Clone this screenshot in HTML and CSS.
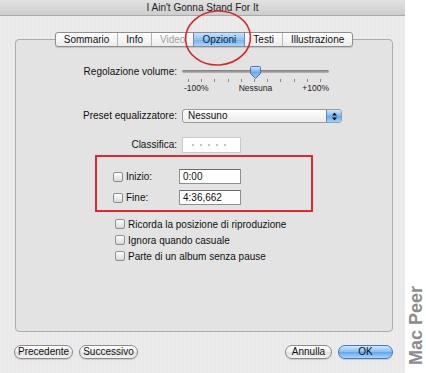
FILE: index.html
```html
<!DOCTYPE html>
<html lang="it">
<head>
  <meta charset="UTF-8" />
  <title>I Ain't Gonna Stand For It</title>
  <link rel="stylesheet" href="styles.css">
</head>
<body>
  <div class="page">
    <div class="window">
      <div class="titlebar">I Ain't Gonna Stand For It</div>
      <div class="content">
        <!-- Group box with the tab bar sitting on its top border -->
        <div class="group">
          <div class="tabs">
            <div class="tab">Sommario</div>
            <div class="tab">Info</div>
            <div class="tab disabled">Video</div>
            <div class="tab active">Opzioni</div>
            <div class="tab">Testi</div>
            <div class="tab">Illustrazione</div>
          </div>

          <div class="form">
            <div class="row row-volume">
              <div class="label">Regolazione volume:</div>
              <div class="slider">
                <div class="track"></div>
                <svg class="thumb" width="11" height="13" viewBox="0 0 11 13">
                  <defs>
                    <linearGradient id="tg" x1="0" y1="0" x2="0" y2="1">
                      <stop offset="0" stop-color="#d6e9fc"/>
                      <stop offset="0.5" stop-color="#6aa9ec"/>
                      <stop offset="1" stop-color="#9fcdf6"/>
                    </linearGradient>
                  </defs>
                  <path d="M1.5 0.5h8a1 1 0 0 1 1 1v6l-5 5-5-5v-6a1 1 0 0 1 1-1z" fill="url(#tg)" stroke="#4a74a8" stroke-width="1"/>
                </svg>
                <div class="ticks">
                  <i></i><i></i><i></i><i></i><i></i><i></i><i></i><i></i><i></i><i></i><i></i>
                </div>
                <div class="scale">
                  <span>-100%</span>
                  <span>Nessuna</span>
                  <span>+100%</span>
                </div>
              </div>
            </div>

            <div class="row row-preset">
              <div class="label">Preset equalizzatore:</div>
              <div class="popup">
                <span class="popup-text">Nessuno</span>
                <span class="popup-arrows">
                  <svg width="7" height="9" viewBox="0 0 7 9"><path d="M3.5 0.5 6 3.5H1z M3.5 8.5 6 5.5H1z" fill="#111"/></svg>
                </span>
              </div>
            </div>

            <div class="row row-rating">
              <div class="label">Classifica:</div>
              <div class="rating">
                <i></i><i></i><i></i><i></i><i></i>
              </div>
            </div>

            <!-- red annotation frame around start / stop time -->
            <div class="highlight">
              <div class="time-row">
                <span class="checkbox"></span>
                <span class="time-label">Inizio:</span>
                <span class="field">0:00</span>
              </div>
              <div class="time-row">
                <span class="checkbox"></span>
                <span class="time-label">Fine:</span>
                <span class="field">4:36,662</span>
              </div>
            </div>

            <div class="checks">
              <div class="check-row"><span class="checkbox"></span>Ricorda la posizione di riproduzione</div>
              <div class="check-row"><span class="checkbox"></span>Ignora quando casuale</div>
              <div class="check-row"><span class="checkbox"></span>Parte di un album senza pause</div>
            </div>
          </div>
        </div>

        <div class="buttons">
          <div class="btn-group">
            <div class="btn">Precedente</div>
            <div class="btn">Successivo</div>
          </div>
          <div class="btn-group">
            <div class="btn btn-cancel">Annulla</div>
            <div class="btn btn-ok">OK</div>
          </div>
        </div>
      </div>
    </div>
    <div class="side">
      <span class="watermark">Mac Peer</span>
    </div>
  </div>

  <!-- red hand-drawn circle over the Opzioni tab -->
  <svg class="circle" width="72" height="58" viewBox="0 0 72 58">
    <ellipse cx="35" cy="29" rx="32.5" ry="27" fill="none" stroke="#d8262d" stroke-width="1.6" transform="rotate(-4 35 29)"/>
  </svg>
</body>
</html>
```

FILE: styles.css
```css
/* Base page */
body {
  margin: 0;
  font-family: "Liberation Sans", Arial, sans-serif;
  font-size: 10px;
  color: #111;
  background: #fff;
  position: relative;
  overflow: hidden;
}
.page {
  display: flex;
  width: 426px;
  height: 373px;
}
/* Window */
.window {
  width: 405px;
  height: 373px;
  background: #ebebeb;
  display: flex;
  flex-direction: column;
}
.titlebar {
  height: 15px;
  line-height: 15px;
  text-align: center;
  background: linear-gradient(#e2e2e2, #cdcdcd);
  border-bottom: 1px solid #a9a9a9;
  color: #222;
}
.content {
  flex: 1;
  background: repeating-linear-gradient(90deg, #ececec 0 2px, #e9e9e9 2px 4px);
}
/* Group box */
.group {
  margin: 23px 12px 0 15px;
  height: 291px;
  border: 1px solid #acacac;
  border-radius: 4px;
  background: #e3e3e3;
}
/* Tab bar */
.tabs {
  display: flex;
  width: max-content;
  margin: -8px auto 0;
  height: 13px;
  border: 1px solid #8e8e8e;
  border-radius: 3px;
  background: linear-gradient(#fefefe, #ececec);
  box-shadow: 0 1px 1px rgba(0, 0, 0, 0.15);
  overflow: hidden;
}
.tab {
  padding: 0 8px;
  line-height: 13px;
  border-left: 1px solid #b5b5b5;
  color: #111;
}
.tab:first-child {
  border-left: none;
}
.tab.disabled {
  color: #a2a2a2;
}
.tab.active {
  background: linear-gradient(#c9e1f9, #8ec2f4 50%, #74b0ee 51%, #a8d4fa);
  color: #0b1f40;
  border-left-color: #6b8fb9;
}
.tab.active + .tab {
  border-left-color: #6b8fb9;
}
/* Form rows */
.form {
  padding-top: 19px;
}
.row {
  display: flex;
  align-items: center;
}
.label {
  width: 161px;
  margin-right: 5px;
  text-align: right;
  line-height: 12px;
}
.row-volume {
  align-items: flex-start;
}
/* Volume slider */
.slider {
  position: relative;
  width: 147px;
  height: 27px;
}
.track {
  margin-top: 4px;
  height: 3px;
  border-radius: 2px;
  background: linear-gradient(#7a7a7a, #b9b9b9);
}
.thumb {
  position: absolute;
  left: 68px;
  top: 0;
}
.ticks {
  display: flex;
  justify-content: space-between;
  padding: 0 8px 0 6px;
  margin-top: 6px;
}
.ticks i {
  width: 1px;
  height: 3px;
  background: #8a8a8a;
}
.scale {
  display: flex;
  justify-content: space-between;
  padding-left: 2px;
  font-size: 8.5px;
  line-height: 10px;
  margin-top: 1px;
  color: #222;
}
/* Popup menu */
.row-preset {
  margin-top: 16px;
}
.popup {
  display: flex;
  width: 158px;
  height: 12px;
  border: 1px solid #9b9b9b;
  border-radius: 3px;
  background: linear-gradient(#ffffff, #ececec);
  overflow: hidden;
}
.popup-text {
  flex: 1;
  padding-left: 5px;
  line-height: 12px;
}
.popup-arrows {
  width: 14px;
  display: flex;
  align-items: center;
  justify-content: center;
  background: linear-gradient(#cfe5fb, #7cb8f1 50%, #5ea6ee 51%, #a6d3fb);
  border-left: 1px solid #5a86bd;
}
/* Rating field */
.row-rating {
  margin-top: 14px;
}
.rating {
  display: flex;
  gap: 6px;
  align-items: center;
  width: 48px;
  height: 14px;
  padding-left: 9px;
  border: 1px solid #c9c9c9;
  background: #fff;
}
.rating i {
  width: 2px;
  height: 2px;
  background: #c4c4c4;
}
/* Red annotation frame */
.highlight {
  margin: 2px 0 0 79px;
  width: 198px;
  border: 2px solid #dc2a30;
  padding: 12px 0 5px 16px;
}
.time-row {
  display: flex;
  align-items: center;
  height: 15px;
}
.time-row + .time-row {
  margin-top: 6px;
}
.time-label {
  width: 53px;
}
.field {
  width: 57px;
  height: 13px;
  line-height: 13px;
  padding-left: 3px;
  border: 1px solid #8f8f8f;
  border-top-color: #6c6c6c;
  background: #fff;
}
/* Checkboxes */
.checkbox {
  width: 8px;
  height: 8px;
  border: 1px solid #8d8d8d;
  border-radius: 2px;
  background: linear-gradient(#ffffff, #dadada);
  margin-right: 3px;
  flex: none;
}
.checks {
  margin: 4px 0 0 99px;
}
.check-row {
  display: flex;
  align-items: center;
  height: 16px;
}
/* Bottom buttons */
.buttons {
  display: flex;
  justify-content: space-between;
  padding: 0 12px 0 14px;
  margin-top: 13px;
}
.btn-group {
  display: flex;
  gap: 6px;
}
.btn {
  height: 12px;
  line-height: 12px;
  padding: 0 3px;
  border: 1px solid #8a8a8a;
  border-radius: 7px;
  background: linear-gradient(#ffffff, #f0f0f0 50%, #e0e0e0 51%, #f4f4f4);
  box-shadow: 0 1px 1px rgba(0, 0, 0, 0.15);
  text-align: center;
}
.btn-cancel {
  width: 39px;
}
.btn-ok {
  width: 47px;
  border-color: #4a78b6;
  background: linear-gradient(#cfe6fc, #82bdf3 50%, #5fa6ee 51%, #a9d6fc);
}
/* Watermark strip */
.side {
  width: 21px;
  display: flex;
  flex-direction: column;
  justify-content: flex-end;
  align-items: center;
  padding-bottom: 8px;
  box-sizing: border-box;
}
.watermark {
  writing-mode: vertical-rl;
  transform: rotate(180deg);
  font-family: "Liberation Sans", Arial, sans-serif;
  font-weight: bold;
  font-size: 18px;
  line-height: 18px;
  color: #8c8c8c;
}
/* Annotation circle overlay */
.circle {
  position: absolute;
  left: 183px;
  top: 9px;
}
```
